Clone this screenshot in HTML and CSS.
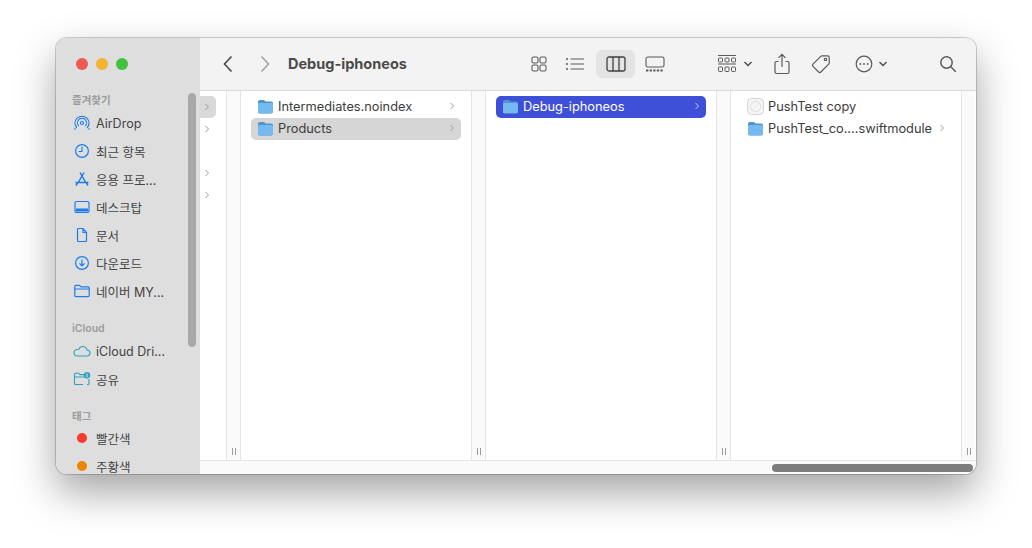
FILE: index.html
```html
<!DOCTYPE html>
<html>
<head>
    <title>Debug-iphoneos</title>
    <link rel="stylesheet" href="styles.css">
</head>
<body>
    <svg class="defs" width="0" height="0">
        <symbol id="folder" viewBox="0 0 17 15">
            <path d="M1 3.2C1 1.9 1.8 1 3 1h3.4c.8 0 1.2.3 1.7.9l.5.6H14c1.3 0 2 .8 2 2v8c0 1.200-.7 2-2 2H3c-1.200 0-2-.8-2-2z" fill="#4f93cf"/>
            <path d="M1 5.600c0-1 .6-1.600 1.600-1.600h11.800c1 0 1.600.6 1.600 1.600v7c0 1-.6 1.700-1.600 1.700H2.600c-1 0-1.600-.7-1.600-1.700z" fill="#74b9f0"/>
        </symbol>
        <symbol id="chev" viewBox="0 0 6 8">
            <path d="M1.500 1l3 3-3 3" fill="none" stroke="currentColor" stroke-width="1"/>
        </symbol>
    </svg>

    <div class="window">
        <div class="sidebar">
            <div class="lights">
                <span class="light red"></span>
                <span class="light yellow"></span>
                <span class="light green"></span>
            </div>
            <div class="side-title">즐겨찾기</div>
            <div class="side-row">
                <svg class="side-icon" viewBox="0 0 18 18" fill="none" stroke="#1c7cf0" stroke-width="1.100"><circle cx="9" cy="9" r="1.500"/><path d="M5.800 12a4.500 4.500 0 1 1 6.400 0M3.900 14a7 7 0 1 1 10.200 0M2.500 15.700a9 8.800 0 0 1-1-1.500M15.500 15.700a9 8.800 0 0 0 1-1.500"/></svg>
                <span>AirDrop</span>
            </div>
            <div class="side-row">
                <svg class="side-icon" viewBox="0 0 18 18" fill="none" stroke="#1c7cf0" stroke-width="1.200"><circle cx="9" cy="9" r="6.400"/><path d="M9 4.800V9.500H5.600"/></svg>
                <span>최근 항목</span>
            </div>
            <div class="side-row">
                <svg class="side-icon" viewBox="0 0 18 18" fill="none" stroke="#1c7cf0" stroke-width="1.500"><path d="M7 2.500l6 10.500M11 2.500L5 13M2.500 12.500h13M4.500 13l-1.500 2.500M13.500 13l1.500 2.500"/></svg>
                <span>응용 프로…</span>
            </div>
            <div class="side-row">
                <svg class="side-icon" viewBox="0 0 18 18" fill="none" stroke="#1c7cf0" stroke-width="1.200"><rect x="2" y="3.500" width="14" height="11" rx="1.500"/><rect x="3" y="10.500" width="12" height="3" fill="#1c7cf0" stroke="none"/></svg>
                <span>데스크탑</span>
            </div>
            <div class="side-row">
                <svg class="side-icon" viewBox="0 0 18 18" fill="none" stroke="#1c7cf0" stroke-width="1.200"><path d="M4.500 3.500c0-.7.4-1 1-1H10l3.500 4v8c0 .7-.4 1-1 1h-7c-.6 0-1-.3-1-1zM10 2.500v4h3.500"/></svg>
                <span>문서</span>
            </div>
            <div class="side-row">
                <svg class="side-icon" viewBox="0 0 18 18" fill="none" stroke="#1c7cf0" stroke-width="1.200"><circle cx="9" cy="9" r="6.400"/><path d="M9 5.500v6.200M6.500 9.300L9 11.800l2.500-2.500"/></svg>
                <span>다운로드</span>
            </div>
            <div class="side-row">
                <svg class="side-icon" viewBox="0 0 18 18" fill="none" stroke="#1c7cf0" stroke-width="1.200"><path d="M1.800 4.500c0-.8.5-1.200 1.200-1.200h3.500l1.500 1.500H15c.8 0 1.200.4 1.200 1.200v7.500c0 .8-.4 1.200-1.200 1.200H3c-.7 0-1.200-.4-1.200-1.200zM1.800 7h14.400"/></svg>
                <span>네이버 MY...</span>
            </div>
            <div class="side-title gap">iCloud</div>
            <div class="side-row">
                <svg class="side-icon" viewBox="0 0 18 18" fill="none" stroke="#2fa0bf" stroke-width="1.100"><path d="M4.500 14h9.200c1.900 0 3.300-1.300 3.300-3s-1.300-2.900-3-3c-.5-2.200-2.200-3.500-4.200-3.500-1.800 0-3.300 1-4 2.700C3 7.200 1 8.600 1 10.800 1 12.700 2.500 14 4.500 14z"/></svg>
                <span>iCloud Dri...</span>
            </div>
            <div class="side-row">
                <svg class="side-icon" viewBox="0 0 18 18" fill="none" stroke="#2fa0bf" stroke-width="1.100"><path d="M10 14.500H2.500c-.7 0-1-.4-1-1V4.200c0-.7.3-1 1-1h3.200l1.300 1.400h4M1.500 7h10M16 9v4.500c0 .6-.4 1-1 1h-1"/><circle cx="14" cy="5.200" r="3.200" fill="#2fa0bf" stroke="none"/><path d="M14 3.500v3.500" stroke="#dedede"/></svg>
                <span>공유</span>
            </div>
            <div class="side-title gap tags">태그</div>
            <div class="side-row">
                <span class="tag-dot dot-red"></span>
                <span>빨간색</span>
            </div>
            <div class="side-row">
                <span class="tag-dot dot-orange"></span>
                <span>주황색</span>
            </div>
            <div class="side-scroll"></div>
        </div>

        <div class="main">
            <div class="toolbar">
                <div class="tool nav">
                    <svg width="12" height="18" viewBox="0 0 12 18" fill="none" stroke="#4c4c4c" stroke-width="1.700"><path d="M9.500 1.500L2.500 9l7 7.500"/></svg>
                </div>
                <div class="tool nav off">
                    <svg width="12" height="18" viewBox="0 0 12 18" fill="none" stroke="#a8a8a8" stroke-width="1.700"><path d="M2.500 1.500L9.500 9l-7 7.500"/></svg>
                </div>
                <div class="win-title">Debug-iphoneos</div>

                <div class="tool view">
                    <svg width="18" height="18" viewBox="0 0 18 18" fill="none" stroke="#5a5a5a" stroke-width="1.100"><rect x="2" y="2" width="6" height="6" rx="1.500"/><rect x="10" y="2" width="6" height="6" rx="1.500"/><rect x="2" y="10" width="6" height="6" rx="1.500"/><rect x="10" y="10" width="6" height="6" rx="1.500"/></svg>
                </div>
                <div class="tool view">
                    <svg width="20" height="16" viewBox="0 0 20 16" fill="none" stroke="#5a5a5a" stroke-width="1.200"><path d="M5.500 3H19M5.500 8H19M5.500 13H19"/><path d="M1 3h2M1 8h2M1 13h2" stroke-width="1.600"/></svg>
                </div>
                <div class="tool view active">
                    <svg width="20" height="16" viewBox="0 0 20 16" fill="none" stroke="#404040" stroke-width="1.300"><rect x="1" y="1" width="18" height="14" rx="2"/><path d="M7 1v14M13 1v14"/></svg>
                </div>
                <div class="tool view gallery">
                    <svg width="20" height="16" viewBox="0 0 20 16" fill="none" stroke="#5a5a5a" stroke-width="1.100"><rect x="1" y="1" width="18" height="10" rx="1.800"/><path d="M1 14.500h18" stroke-width="2.200" stroke-dasharray="2.300 1.300"/></svg>
                </div>

                <div class="tool group">
                    <svg width="20" height="18" viewBox="0 0 20 18" fill="none" stroke="#5a5a5a" stroke-width="1"><path d="M1 .5h18M1 9h18"/><rect x="1.500" y="3" width="4" height="4" rx=".8"/><rect x="8" y="3" width="4" height="4" rx=".8"/><rect x="14.500" y="3" width="4" height="4" rx=".8"/><rect x="1.500" y="12" width="4" height="4.500" rx=".8"/><rect x="8" y="12" width="4" height="4.500" rx=".8"/><rect x="14.500" y="12" width="4" height="4.500" rx=".8"/></svg>
                    <svg class="drop" width="10" height="6" viewBox="0 0 10 6" fill="none" stroke="#4c4c4c" stroke-width="1.400"><path d="M1.500 1L5 4.500 8.500 1"/></svg>
                </div>
                <div class="tool share">
                    <svg width="18" height="22" viewBox="0 0 18 22" fill="none" stroke="#5a5a5a" stroke-width="1.200"><path d="M5.500 8.500H3.500c-1 0-1.500.5-1.500 1.500v9c0 1 .5 1.500 1.500 1.500h11c1 0 1.500-.5 1.500-1.500v-9c0-1-.5-1.500-1.500-1.500h-2M9 14V1.500M5.500 4.800L9 1.300l3.500 3.500"/></svg>
                </div>
                <div class="tool tag">
                    <svg width="20" height="20" viewBox="0 0 20 20" fill="none" stroke="#5a5a5a" stroke-width="1.200"><path d="M11 1.800h5.500c1 0 1.700.7 1.700 1.700V9c0 .5-.2.9-.5 1.200l-7.800 7.800c-.7.700-1.600.7-2.300 0L2 12.400c-.7-.7-.7-1.600 0-2.300l7.800-7.800c.3-.3.7-.5 1.200-.5z"/><circle cx="14.500" cy="5.500" r="1.200"/></svg>
                </div>
                <div class="tool more">
                    <svg width="18" height="18" viewBox="0 0 18 18" fill="none" stroke="#5a5a5a" stroke-width="1.200"><circle cx="9" cy="9" r="7.800"/><circle cx="5.300" cy="9" r=".9" fill="#5a5a5a" stroke="none"/><circle cx="9" cy="9" r=".9" fill="#5a5a5a" stroke="none"/><circle cx="12.700" cy="9" r=".9" fill="#5a5a5a" stroke="none"/></svg>
                    <svg class="drop" width="10" height="6" viewBox="0 0 10 6" fill="none" stroke="#4c4c4c" stroke-width="1.400"><path d="M1.500 1L5 4.500 8.500 1"/></svg>
                </div>
                <div class="tool search">
                    <svg width="18" height="18" viewBox="0 0 18 18" fill="none" stroke="#5a5a5a" stroke-width="1.500"><circle cx="7.500" cy="7.500" r="5.700"/><path d="M11.800 11.800l5 5"/></svg>
                </div>
            </div>

            <div class="browser">
                <div class="col first">
                    <div class="stub sel"><svg class="chev"><use href="#chev"/></svg></div>
                    <div class="stub"><svg class="chev"><use href="#chev"/></svg></div>
                    <div class="stub"></div>
                    <div class="stub"><svg class="chev"><use href="#chev"/></svg></div>
                    <div class="stub"><svg class="chev"><use href="#chev"/></svg></div>
                </div>
                <div class="handle"><span class="grip"></span></div>

                <div class="col">
                    <div class="row">
                        <svg class="file-icon"><use href="#folder"/></svg>
                        <span class="name">Intermediates.noindex</span>
                        <svg class="chev"><use href="#chev"/></svg>
                    </div>
                    <div class="row current">
                        <svg class="file-icon"><use href="#folder"/></svg>
                        <span class="name">Products</span>
                        <svg class="chev"><use href="#chev"/></svg>
                    </div>
                </div>
                <div class="handle"><span class="grip"></span></div>

                <div class="col">
                    <div class="row selected">
                        <svg class="file-icon"><use href="#folder"/></svg>
                        <span class="name">Debug-iphoneos</span>
                        <svg class="chev"><use href="#chev"/></svg>
                    </div>
                </div>
                <div class="handle"><span class="grip"></span></div>

                <div class="col">
                    <div class="row">
                        <svg class="file-icon app-icon" viewBox="0 0 17 17" fill="none"><rect x=".5" y=".5" width="16" height="16" rx="4" fill="#f6f6f6" stroke="#d4d4d4"/><circle cx="8.500" cy="8.500" r="5.200" stroke="#e2e2e2" stroke-width="1.200"/><path d="M5 12l7-7" stroke="#e6e6e6"/></svg>
                        <span class="name">PushTest copy</span>
                    </div>
                    <div class="row">
                        <svg class="file-icon"><use href="#folder"/></svg>
                        <span class="name">PushTest_co....swiftmodule</span>
                        <svg class="chev"><use href="#chev"/></svg>
                    </div>
                </div>
                <div class="handle"><span class="grip"></span></div>
            </div>

            <div class="hscroll"><div class="thumb"></div></div>
        </div>
    </div>
</body>
</html>
```

FILE: styles.css
```css
body {
    margin: 0;
    padding: 38px 56px 0;
    height: 548px;
    box-sizing: border-box;
    overflow: hidden;
    background-color: #ffffff;
    font-family: 'Inter', 'Noto Sans CJK KR', sans-serif;
    color: #3c3c3c;
}
.defs {
    position: absolute;
}
.window {
    display: flex;
    width: 920px;
    height: 436px;
    border-radius: 11px;
    overflow: hidden;
    background-color: #ffffff;
    box-shadow: 0 0 0 1px rgba(0, 0, 0, 0.18), 0 18px 40px rgba(0, 0, 0, 0.36);
}

/* sidebar */
.sidebar {
    position: relative;
    flex: none;
    width: 144px;
    background-color: #dedede;
    overflow: hidden;
}
.lights {
    display: flex;
    gap: 8px;
    padding: 20px 0 0 20px;
    height: 32px;
}
.light {
    width: 12px;
    height: 12px;
    border-radius: 50%;
}
.red { background-color: #ee5a50; }
.yellow { background-color: #f2b632; }
.green { background-color: #45c03c; }
.side-title {
    height: 16px;
    line-height: 16px;
    margin-top: 3px;
    padding-left: 16px;
    font-size: 10.500px;
    font-weight: 600;
    color: #9b9b9b;
}
.side-title.gap {
    margin-top: 16px;
}
.side-title.tags {
    height: 15px;
}
.side-row {
    display: flex;
    align-items: center;
    height: 28px;
    padding-left: 17px;
    font-size: 12.500px;
    color: #444444;
}
.side-icon {
    flex: none;
    width: 18px;
    height: 18px;
    margin-right: 5px;
}
.tag-dot {
    flex: none;
    width: 10px;
    height: 10px;
    border-radius: 50%;
    margin: 0 9px 0 4px;
}
.dot-red { background-color: #f53a2e; }
.dot-orange { background-color: #ee8400; }
.side-scroll {
    position: absolute;
    top: 55px;
    left: 132px;
    width: 8px;
    height: 254px;
    border-radius: 4px;
    background-color: #a9a9a9;
}

/* toolbar */
.main {
    flex: 1;
    display: flex;
    flex-direction: column;
    min-width: 0;
}
.toolbar {
    flex: none;
    display: flex;
    align-items: center;
    height: 53px;
    padding: 0 0 1px 9px;
    box-sizing: border-box;
    background-color: #f3f3f3;
    border-bottom: 1px solid #d9d9d9;
}
.tool {
    flex: none;
    display: flex;
    align-items: center;
    justify-content: center;
    height: 28px;
}
.nav {
    width: 37px;
}
.win-title {
    flex: 1;
    margin-left: 5px;
    font-size: 14.500px;
    font-weight: 700;
    color: #4a4a4a;
}
.view {
    width: 36px;
    border-radius: 6px;
}
.active {
    width: 39px;
    margin-left: 3px;
    background-color: #e4e4e4;
}
.gallery {
    width: 39px;
}
.group {
    width: 44px;
    margin-left: 39px;
}
.more {
    width: 44px;
    margin-left: 10.500px;
}
.drop {
    margin-left: 5px;
}
.group .drop {
    margin-left: 6px;
}
.share {
    width: 36px;
    margin-left: 7px;
}
.tag {
    width: 36px;
    margin-left: 3px;
}
.search {
    width: 36px;
    margin-left: 36.500px;
    margin-right: 10px;
}

/* columns */
.browser {
    flex: 1;
    display: flex;
    min-height: 0;
}
.col {
    flex: none;
    width: 230px;
    padding-top: 5px;
    box-sizing: border-box;
}
.col.first {
    width: 26px;
}
.handle {
    flex: none;
    display: flex;
    align-items: flex-end;
    justify-content: center;
    width: 13px;
    padding-bottom: 5px;
    background-color: #fafafa;
    border-left: 1px solid #e5e5e5;
    border-right: 1px solid #e5e5e5;
}
.browser .handle:last-child {
    border-right: none;
}
.grip {
    width: 2px;
    height: 7px;
    border-left: 1px solid #9a9a9a;
    border-right: 1px solid #9a9a9a;
}
.stub {
    display: flex;
    align-items: center;
    width: 16px;
    height: 22px;
    padding-left: 4px;
    box-sizing: border-box;
    color: #9a9a9a;
}
.stub.sel {
    background-color: #d9d9d9;
    border-radius: 0 5px 5px 0;
}
.chev {
    flex: none;
    width: 6px;
    height: 8px;
    color: #9a9a9a;
}
.row {
    display: flex;
    align-items: center;
    height: 22px;
    margin: 0 10px;
    padding: 0 6px 2px;
    box-sizing: border-box;
    border-radius: 5px;
    font-size: 12.800px;
    color: #3c3c3c;
}
.file-icon {
    flex: none;
    width: 17px;
    height: 15px;
    margin-right: 4px;
}
.app-icon {
    height: 17px;
}
.name {
    flex: 1;
    white-space: nowrap;
}
.current {
    background-color: #d6d6d6;
}
.selected {
    background-color: #3f50d8;
    color: #ffffff;
}
.selected .chev {
    color: #c5cbf3;
}

/* bottom scroll bar */
.hscroll {
    flex: none;
    display: flex;
    align-items: center;
    justify-content: flex-end;
    height: 14px;
    padding-right: 3px;
    box-sizing: border-box;
    background-color: #fafafa;
    border-top: 1px solid #e5e5e5;
}
.thumb {
    width: 201px;
    height: 8px;
    border-radius: 4px;
    background-color: #7d7d7d;
}
```
